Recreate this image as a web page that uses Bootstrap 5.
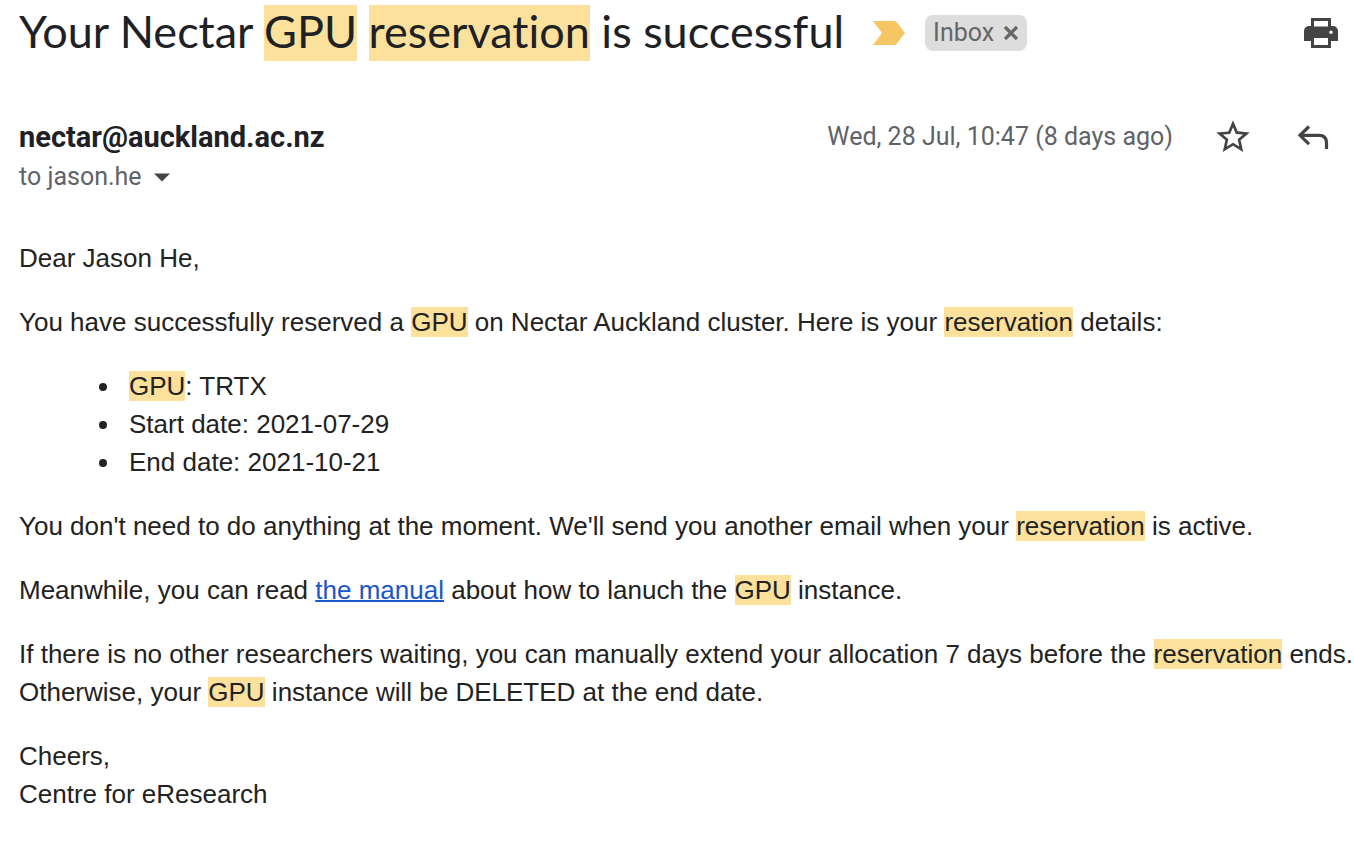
<!DOCTYPE html>
<html lang="en">
<head>
<meta charset="utf-8">
<meta name="viewport" content="width=device-width, initial-scale=1">
<title>Your Nectar GPU reservation is successful</title>
<link href="https://cdn.jsdelivr.net/npm/bootstrap@5.3.0/dist/css/bootstrap.min.css" rel="stylesheet">
<style>
  body { background: #fff; color: #222; font-family: "Liberation Sans", Arial, sans-serif; }
  mark { background: #fce19c; color: inherit; padding: 0; }
  .mail { padding: 5px 0 38px 19px; }
  .mail-top { padding-right: 16px; margin-bottom: 56px; }
  .subject { font-family: Lato, sans-serif; font-size: 45px; line-height: 52px; font-weight: 400; color: #202124; font-variant-ligatures: none; padding-bottom: 4px; }
  .subject mark { display: inline-block; padding-bottom: 4px; margin-bottom: -4px; }
  .ui-text { font-family: Roboto, sans-serif; font-size: 25px; line-height: 40px; color: #5f6368; }
  .sender { font-size: 29px; font-weight: 700; color: #202124; }
  .importance { margin-left: 29px; margin-right: 20px; }
  .label-chip { background: #ddd; color: #666; border-radius: 8px; height: 36px; padding: 0 8px; gap: 9px; font-size: 25px; line-height: 36px; }
  .icon-btn { border: 0; background: none; padding: 0; display: flex; color: #444; }
  .mail-meta { padding-right: 21px; margin-bottom: 42px; }
  .actions { gap: 40px; }
  .stamp { margin-right: 40px; }
  .message { font-size: 26px; line-height: 38px; }
  .message p, .message ul { margin-bottom: 26px; }
  .message ul { padding-left: 103px; }
  .message li { padding-left: 7px; }
  .message a { color: #1a57cb; text-decoration-thickness: 2px; }
</style>
</head>
<body>
<main class="mail">
  <header class="mail-top d-flex align-items-center">
    <h1 class="subject mb-0">Your Nectar <mark>GPU</mark> <mark>reservation</mark> is successful</h1>
    <button class="icon-btn importance" aria-label="Important">
      <svg width="32" height="24" viewBox="0 0 32 24"><path fill="#f6c664" d="M0 0h21q2 0 3 1.500L32 12l-8 10.500Q23 24 21 24H0l9-12z"/></svg>
    </button>
    <div class="label-chip ui-text d-flex align-items-center">
      <span>Inbox</span>
      <button class="icon-btn" aria-label="Remove label Inbox">
        <svg width="16" height="16" viewBox="0 0 16 16" stroke="#666" stroke-width="3.200"><path d="M2 2l12 12M14 2L2 14"/></svg>
      </button>
    </div>
    <button class="icon-btn ms-auto" aria-label="Print all">
      <svg width="34" height="30" viewBox="0 0 34 30"><path fill="#444" fill-rule="evenodd" d="M7 0h20v8h2a5 5 0 0 1 5 5v10h-7v7H7v-7H0V13a5 5 0 0 1 5-5h2zM10 3v5.500h14V3zM10 20v7h14v-7zM27 12.500a1.800 1.800 0 1 0 0 3.600 1.800 1.800 0 0 0 0-3.600z"/></svg>
    </button>
  </header>

  <section class="mail-meta ui-text">
    <div class="d-flex align-items-center">
      <span class="sender me-auto">nectar@auckland.ac.nz</span>
      <time class="stamp" datetime="2021-07-28T10:47">Wed, 28 Jul, 10:47 (8 days ago)</time>
      <div class="actions d-flex align-items-center">
        <button class="icon-btn" aria-label="Star">
          <svg width="40" height="40" viewBox="0 0 24 24" fill="currentColor"><path d="M22 9.240l-7.190-.62L12 2 9.190 8.630 2 9.240l5.460 4.730L5.820 21 12 17.270 18.180 21l-1.630-7.030L22 9.240zM12 15.400l-3.760 2.270 1-4.280-3.320-2.880 4.380-.38L12 6.100l1.710 4.040 4.380.38-3.320 2.880 1 4.280L12 15.400z"/></svg>
        </button>
        <button class="icon-btn" aria-label="Reply">
          <svg width="40" height="40" viewBox="0 0 40 40" fill="none" stroke="currentColor" stroke-width="3.200"><path d="M16 9.500L7 18.300l9 8.800M7 18.300h19q7.500 0 7.500 7.500v6.200"/></svg>
        </button>
      </div>
    </div>
    <div class="d-flex align-items-center gap-2">
      <span>to jason.he</span>
      <button class="icon-btn" aria-label="Show details">
        <svg width="24" height="24" viewBox="0 0 24 24"><path fill="#444" d="M4 8.500h16l-8 8z"/></svg>
      </button>
    </div>
  </section>

  <article class="message">
    <p>Dear Jason He,</p>
    <p>You have successfully reserved a <mark>GPU</mark> on Nectar Auckland cluster. Here is your <mark>reservation</mark> details:</p>
    <ul>
      <li><mark>GPU</mark>: TRTX</li>
      <li>Start date: 2021-07-29</li>
      <li>End date: 2021-10-21</li>
    </ul>
    <p>You don't need to do anything at the moment. We'll send you another email when your <mark>reservation</mark> is active.</p>
    <p>Meanwhile, you can read <a href="#">the manual</a> about how to lanuch the <mark>GPU</mark> instance.</p>
    <p>
      <span class="d-block">If there is no other researchers waiting, you can manually extend your allocation 7 days before the <mark>reservation</mark> ends.</span>
      <span class="d-block">Otherwise, your <mark>GPU</mark> instance will be DELETED at the end date.</span>
    </p>
    <p class="mb-0">Cheers,<br>Centre for eResearch</p>
  </article>
</main>
<script src="https://cdn.jsdelivr.net/npm/bootstrap@5.3.0/dist/js/bootstrap.bundle.min.js"></script>
</body>
</html>
